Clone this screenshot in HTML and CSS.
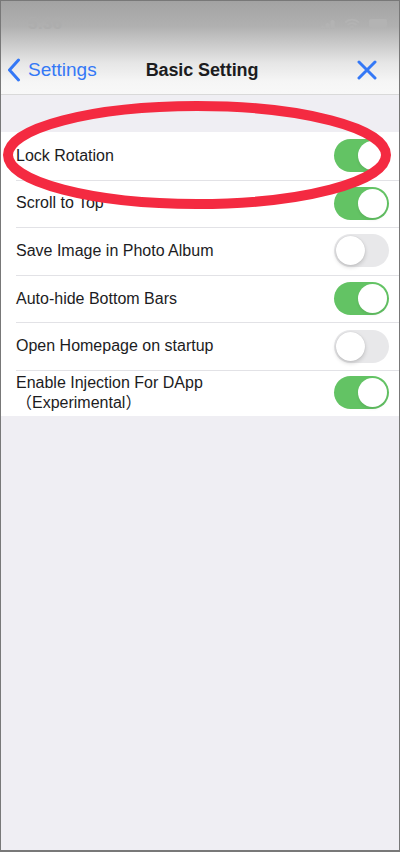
FILE: index.html
```html
<!DOCTYPE html>
<html lang="en">
<head>
    <meta charset="UTF-8">
    <meta name="viewport" content="width=device-width, initial-scale=1.0">
    <title>Basic Setting</title>
    <link rel="stylesheet" href="styles.css">
</head>
<body>

    <div class="screen">
        <header class="top-bar">
            <div class="status-bar">
                <span class="clock">5:36</span>
                <div class="status-icons">
                    <svg width="14" height="10" viewBox="0 0 14 10">
                        <rect x="0" y="7" width="3" height="3" rx="0.5"/>
                        <rect x="5" y="4.5" width="3" height="5.5" rx="0.5"/>
                        <rect x="10" y="1.5" width="3" height="8.5" rx="0.5"/>
                    </svg>
                    <svg width="16" height="12" viewBox="0 0 16 12">
                        <path d="M8 11.5 L5.6 9 A3.4 3.4 0 0 1 10.4 9 Z"/>
                        <path d="M3.6 7 A6.2 6.2 0 0 1 12.4 7" fill="none" stroke-width="1.8"/>
                        <path d="M1.2 4.5 A9.6 9.6 0 0 1 14.8 4.5" fill="none" stroke-width="1.8"/>
                    </svg>
                    <svg width="18" height="9" viewBox="0 0 18 9">
                        <rect x="0" y="0" width="18" height="9" rx="2.5"/>
                    </svg>
                </div>
            </div>

            <nav class="nav-bar">
                <a class="nav-back">
                    <svg width="14" height="24" viewBox="0 0 14 24">
                        <path d="M11.5 2 L2.5 12 L11.5 22" fill="none" stroke="#3478f6" stroke-width="3" stroke-linecap="round" stroke-linejoin="round"/>
                    </svg>
                    <span>Settings</span>
                </a>
                <h1 class="nav-title">Basic Setting</h1>
                <a class="nav-close">
                    <svg width="20" height="20" viewBox="0 0 20 20">
                        <path d="M2 2 L18 18 M18 2 L2 18" fill="none" stroke="#3478f6" stroke-width="3" stroke-linecap="round"/>
                    </svg>
                </a>
            </nav>
        </header>

        <ul class="settings-list">
            <li class="setting-row">
                <span class="setting-label">Lock Rotation</span>
                <span class="toggle on"></span>
            </li>
            <li class="setting-row">
                <span class="setting-label">Scroll to Top</span>
                <span class="toggle on"></span>
            </li>
            <li class="setting-row">
                <span class="setting-label">Save Image in Photo Album</span>
                <span class="toggle"></span>
            </li>
            <li class="setting-row">
                <span class="setting-label">Auto-hide Bottom Bars</span>
                <span class="toggle on"></span>
            </li>
            <li class="setting-row">
                <span class="setting-label">Open Homepage on startup</span>
                <span class="toggle"></span>
            </li>
            <li class="setting-row">
                <span class="setting-label">Enable Injection For DApp<br>（Experimental）</span>
                <span class="toggle on"></span>
            </li>
        </ul>

        <!-- red highlight drawn over the first row -->
        <svg class="highlight" width="400" height="230" viewBox="0 0 400 230">
            <ellipse cx="196" cy="154" rx="189" ry="49" fill="none" stroke="#f42a41" stroke-width="10"/>
        </svg>
    </div>

</body>
</html>
```

FILE: styles.css
```css
/* 基本設定頁 */
* { box-sizing: border-box; }

body {
    margin: 0;
    font-family: 'Liberation Sans', 'Noto Sans CJK SC', sans-serif;
    color: #1c1c1e;
}

.screen {
    position: relative;
    width: 400px;
    height: 852px;
    background: #efeef3;
    border: 1px solid #787878;
    border-bottom-width: 2px;
    overflow: hidden;
}

.top-bar {
    background: linear-gradient(#a3a3a3 0px, #b0b0b0 25px, #cdcdcd 45px, #e6e6e6 62px, #f5f5f5 80px, #f8f8f8 93px);
    border-bottom: 1px solid #d9d9d9;
    height: 94px;
}

.status-bar {
    height: 45px;
    display: flex;
    justify-content: space-between;
    align-items: center;
    padding: 0 12px 0 27px;
}

.clock {
    font-size: 17px;
    font-weight: bold;
    color: #adadad;
}

.status-icons {
    display: flex;
    align-items: center;
    gap: 9px;
}

.status-icons svg { fill: #b3b3b3; stroke: #b3b3b3; }

.nav-bar {
    height: 48px;
    display: grid;
    grid-template-columns: 1fr auto 1fr;
    align-items: center;
    padding: 0 2px 0 6px;
}

.nav-back {
    display: flex;
    align-items: center;
    gap: 7px;
    color: #3478f6;
    font-size: 19px;
}

.nav-title {
    margin: 0;
    font-size: 18px;
    font-weight: bold;
    color: #1c1c1e;
    letter-spacing: -0.1px;
}

.nav-close {
    display: flex;
    justify-content: flex-end;
    margin-right: 20px;
}

.settings-list {
    list-style: none;
    margin: 37px 0 0;
    padding: 0;
    background: #fff;
}

.setting-row {
    display: flex;
    align-items: center;
    justify-content: space-between;
    min-height: 47.6px;
    padding: 3px 10px 3px 15px;
    font-size: 16px;
    line-height: 20px;
    position: relative;
}

.setting-row + .setting-row::before {
    content: '';
    position: absolute;
    top: 0;
    left: 15px;
    right: 0;
    border-top: 1px solid #e2e2e6;
}

.setting-row:last-child { min-height: 46px; }

.toggle {
    position: relative;
    width: 55px;
    height: 33px;
    border-radius: 17px;
    background: #e8e8ea;
    flex-shrink: 0;
}

.toggle::after {
    content: '';
    position: absolute;
    top: 2px;
    left: 2px;
    width: 29px;
    height: 29px;
    border-radius: 50%;
    background: #fff;
    box-shadow: 0 2px 4px rgba(0,0,0,0.18), 0 0 1px rgba(0,0,0,0.15);
}

.toggle.on { background: #63c364; }
.toggle.on::after { left: 24px; box-shadow: 0 2px 3px rgba(0,0,0,0.08); }

.highlight {
    position: absolute;
    top: 0;
    left: 0;
    pointer-events: none;
}
```
